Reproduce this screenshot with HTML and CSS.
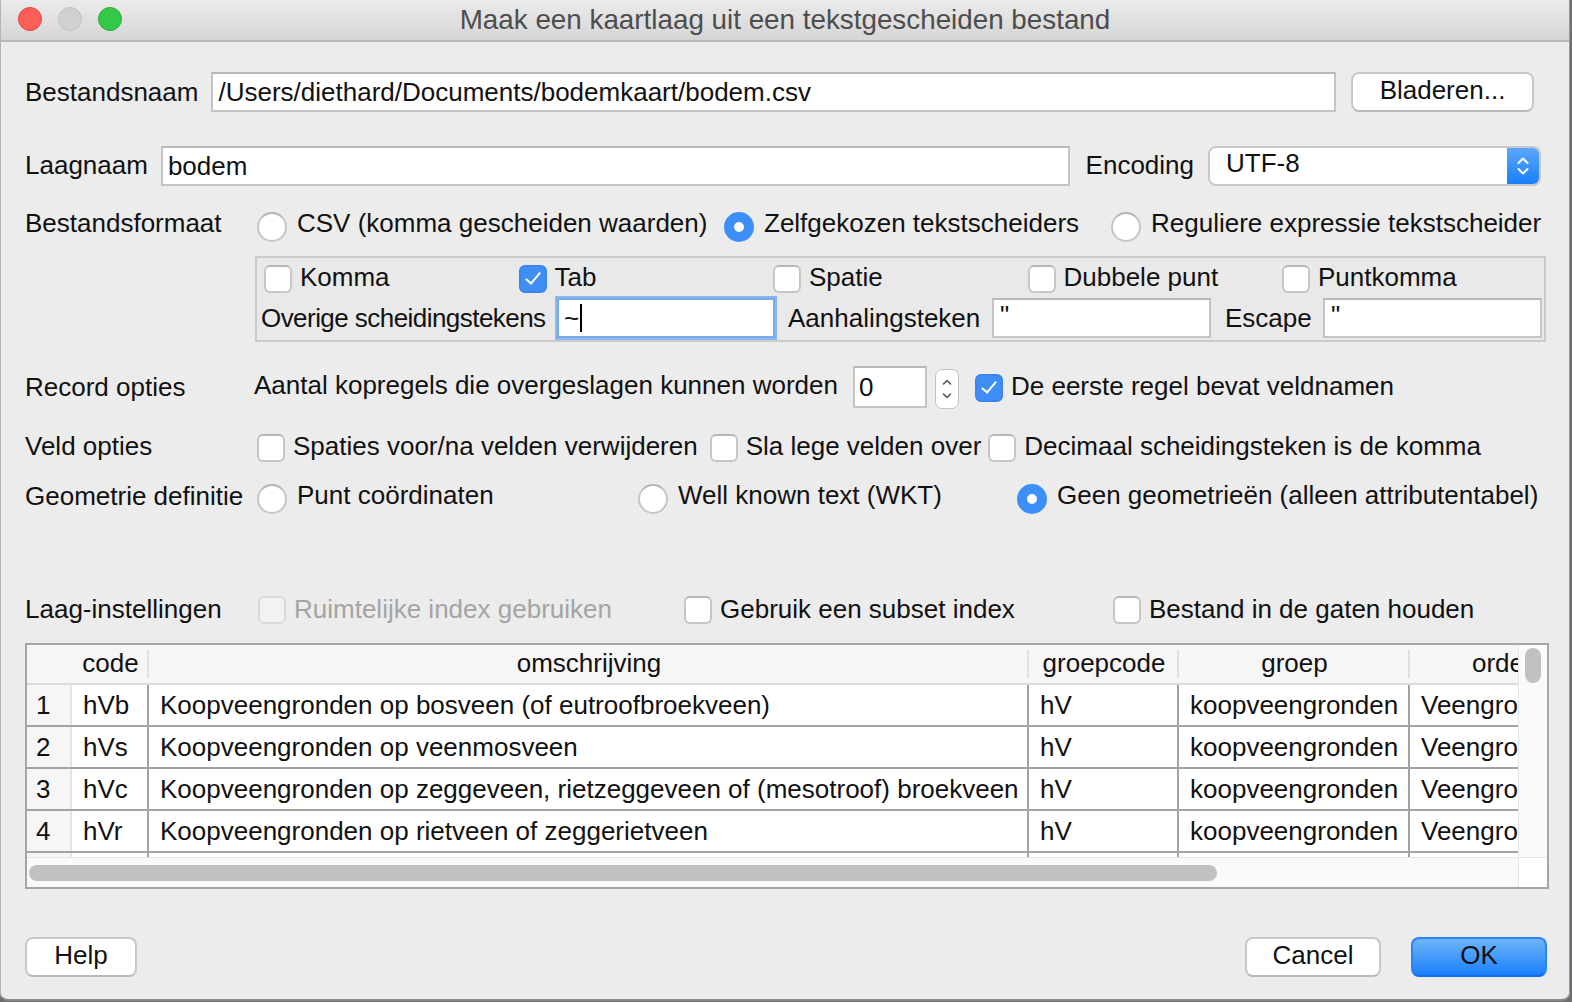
FILE: index.html
```html
<!DOCTYPE html>
<html lang="nl">
<head>
<meta charset="utf-8">
<title>Maak een kaartlaag uit een tekstgescheiden bestand</title>
<link rel="stylesheet" href="styles.css">
</head>
<body>
<div class="window">
  <div class="titlebar">
    <div class="lights">
      <span class="light red"></span>
      <span class="light gray"></span>
      <span class="light green"></span>
    </div>
    <div class="title">Maak een kaartlaag uit een tekstgescheiden bestand</div>
    <div></div>
  </div>

  <div class="content">
    <div class="row r-file">
      <span class="lbl">Bestandsnaam</span>
      <div class="input grow">/Users/diethard/Documents/bodemkaart/bodem.csv</div>
      <div class="btn browse">Bladeren...</div>
    </div>

    <div class="row r-layer">
      <span class="lbl">Laagnaam</span>
      <div class="input grow">bodem</div>
      <span class="lbl">Encoding</span>
      <div class="combo">
        <span class="combo-text">UTF-8</span>
        <span class="combo-arrow">
          <svg width="14" height="24" viewBox="0 0 14 24"><path d="M2.5 9 L7 4.5 L11.5 9 M2.5 15 L7 19.5 L11.5 15" fill="none" stroke="#fff" stroke-width="2" stroke-linecap="round" stroke-linejoin="round"/></svg>
        </span>
      </div>
    </div>

    <div class="row r-format">
      <span class="lbl wide">Bestandsformaat</span>
      <div class="opts opts-format">
        <span class="opt"><span class="radio"></span>CSV (komma gescheiden waarden)</span>
        <span class="opt"><span class="radio on"></span>Zelfgekozen tekstscheiders</span>
        <span class="opt"><span class="radio"></span>Reguliere expressie tekstscheider</span>
      </div>
    </div>

    <div class="group">
      <div class="group-row checks">
        <span class="opt"><span class="cb"></span>Komma</span>
        <span class="opt"><span class="cb on"></span>Tab</span>
        <span class="opt"><span class="cb"></span>Spatie</span>
        <span class="opt"><span class="cb"></span>Dubbele punt</span>
        <span class="opt"><span class="cb"></span>Puntkomma</span>
      </div>
      <div class="group-row fields">
        <span class="f-other">Overige scheidingstekens</span>
        <div class="input focus w-other">~<span class="caret"></span></div>
        <span class="f-quote">Aanhalingsteken</span>
        <div class="input w-quote">"</div>
        <span class="f-escape">Escape</span>
        <div class="input w-escape">"</div>
      </div>
    </div>

    <div class="row r-record">
      <span class="lbl wide">Record opties</span>
      <span class="skip-lbl">Aantal kopregels die overgeslagen kunnen worden</span>
      <div class="input spin">0</div>
      <div class="spin-btns">
        <svg width="14" height="30" viewBox="0 0 14 30"><path d="M3.5 10 L7 6.5 L10.5 10 M3.5 20 L7 23.5 L10.5 20" fill="none" stroke="#555" stroke-width="1.6" stroke-linecap="round" stroke-linejoin="round"/></svg>
      </div>
      <span class="opt"><span class="cb on"></span>De eerste regel bevat veldnamen</span>
    </div>

    <div class="row r-field">
      <span class="lbl wide">Veld opties</span>
      <div class="opts opts-field">
        <span class="opt"><span class="cb"></span>Spaties voor/na velden verwijderen</span>
        <span class="opt"><span class="cb"></span>Sla lege velden over</span>
        <span class="opt"><span class="cb"></span>Decimaal scheidingsteken is de komma</span>
      </div>
    </div>

    <div class="row r-geom">
      <span class="lbl wide">Geometrie definitie</span>
      <div class="opts opts-geom">
        <span class="opt"><span class="radio"></span>Punt coördinaten</span>
        <span class="opt"><span class="radio"></span>Well known text (WKT)</span>
        <span class="opt"><span class="radio on"></span>Geen geometrieën (alleen attributentabel)</span>
      </div>
    </div>

    <div class="row r-laag">
      <span class="lbl wide">Laag-instellingen</span>
      <div class="opts opts-laag">
        <span class="opt disabled"><span class="cb"></span>Ruimtelijke index gebruiken</span>
        <span class="opt"><span class="cb"></span>Gebruik een subset index</span>
        <span class="opt"><span class="cb"></span>Bestand in de gaten houden</span>
      </div>
    </div>

    <div class="table">
      <div class="viewport">
        <div class="trow head">
          <span class="c rn"></span>
          <span class="c code">code</span>
          <span class="c oms">omschrijving</span>
          <span class="c gc">groepcode</span>
          <span class="c gr">groep</span>
          <span class="c orde">orde</span>
        </div>
        <div class="trow">
          <span class="c rn">1</span>
          <span class="c code">hVb</span>
          <span class="c oms">Koopveengronden op bosveen (of eutroofbroekveen)</span>
          <span class="c gc">hV</span>
          <span class="c gr">koopveengronden</span>
          <span class="c orde">Veengronden</span>
        </div>
        <div class="trow">
          <span class="c rn">2</span>
          <span class="c code">hVs</span>
          <span class="c oms">Koopveengronden op veenmosveen</span>
          <span class="c gc">hV</span>
          <span class="c gr">koopveengronden</span>
          <span class="c orde">Veengronden</span>
        </div>
        <div class="trow">
          <span class="c rn">3</span>
          <span class="c code">hVc</span>
          <span class="c oms">Koopveengronden op zeggeveen, rietzeggeveen of (mesotroof) broekveen</span>
          <span class="c gc">hV</span>
          <span class="c gr">koopveengronden</span>
          <span class="c orde">Veengronden</span>
        </div>
        <div class="trow">
          <span class="c rn">4</span>
          <span class="c code">hVr</span>
          <span class="c oms">Koopveengronden op rietveen of zeggerietveen</span>
          <span class="c gc">hV</span>
          <span class="c gr">koopveengronden</span>
          <span class="c orde">Veengronden</span>
        </div>
        <div class="trow">
          <span class="c rn">5</span>
          <span class="c code">hVz</span>
          <span class="c oms">Koopveengronden</span>
          <span class="c gc">hV</span>
          <span class="c gr">koopveengronden</span>
          <span class="c orde">Veengronden</span>
        </div>
      </div>
      <div class="vscroll"><span class="vthumb"></span></div>
      <div class="hscroll"><span class="hthumb"></span></div>
      <div class="corner"></div>
    </div>

    <div class="buttons">
      <div class="btn help">Help</div>
      <div class="spacer"></div>
      <div class="btn cancel">Cancel</div>
      <div class="btn ok">OK</div>
    </div>
  </div>
</div>
</body>
</html>
```

FILE: styles.css
```css
* { box-sizing: border-box; }

html, body {
  margin: 0;
  padding: 0;
  background: #6e6e6e;
}

body {
  width: 1572px;
  height: 1002px;
  overflow: hidden;
  font-family: "Liberation Sans", Arial, Helvetica, sans-serif;
  font-size: 26px;
  color: #111;
}

.window {
  width: 1570px;
  height: 1001px;
  background: #ececec;
  border-right: 1px solid #9a9a9a;
  border-bottom: 2px solid #8a8a8a;
  border-left: 1px solid #b5b5b5;
  border-radius: 0 0 8px 8px;
  display: flex;
  flex-direction: column;
  overflow: hidden;
}

/* title bar */
.titlebar {
  height: 42px;
  flex: none;
  display: grid;
  grid-template-columns: 1fr auto 1fr;
  align-items: center;
  background: linear-gradient(#ebebeb, #d5d5d5);
  border-bottom: 2px solid #b9b9b9;
}

.lights {
  display: flex;
  gap: 16px;
  padding-left: 17px;
  padding-bottom: 2px;
}

.light {
  width: 24px;
  height: 24px;
  border-radius: 50%;
}
.light.red { background: #fc5f57; border: 1px solid #e0443e; }
.light.gray { background: #d0d0d0; border: 1px solid #c2c2c2; }
.light.green { background: #34c849; border: 1px solid #27aa35; }

.title {
  color: #4d4d4d;
  font-size: 27.8px;
}

/* content */
.content {
  flex: 1;
  display: flex;
  flex-direction: column;
  padding: 0 21px 0 24px;
}

.row {
  display: flex;
  align-items: center;
  flex: none;
}

.lbl { flex: none; white-space: nowrap; }
.lbl.wide { width: 229px; }

.input {
  height: 40px;
  background: #fff;
  border: 2px solid #c4c4c4;
  border-top-color: #b8b8b8;
  padding: 0 5px;
  display: flex;
  align-items: center;
  white-space: nowrap;
  overflow: hidden;
}
.grow { flex: 1; }

.btn {
  height: 40px;
  background: #fff;
  border: 2px solid #c8c8c8;
  border-bottom-color: #b9b9b9;
  border-radius: 8px;
  display: flex;
  align-items: center;
  justify-content: center;
  flex: none;
}

.r-file { margin-top: 30px; height: 40px; gap: 13px; }
.r-file .browse { width: 183px; margin-left: 2px; margin-right: 14px; padding-bottom: 3px; }

.r-layer { margin-top: 34px; height: 40px; gap: 13px; }
.r-layer .lbl { padding-bottom: 2px; }
.r-layer .input { margin-right: 3px; }

.combo {
  width: 333px;
  height: 40px;
  flex: none;
  margin-left: 1px;
  margin-right: 7px;
  display: flex;
  background: #fff;
  border: 2px solid #c8c8c8;
  border-radius: 8px;
  overflow: hidden;
}
.combo-text {
  flex: 1;
  padding-left: 16px;
  padding-bottom: 6px;
  display: flex;
  align-items: center;
}
.combo-arrow {
  width: 32px;
  background: linear-gradient(#5aa8fb, #1a7ffa);
  display: flex;
  align-items: center;
  justify-content: center;
}

/* option rows */
.opts { display: grid; align-items: center; }
.opt {
  display: flex;
  align-items: center;
  gap: 10px;
  white-space: nowrap;
}

.radio {
  width: 30px;
  height: 30px;
  flex: none;
  border-radius: 50%;
  background: #fff;
  border: 2px solid #c6c6c6;
  border-top-color: #b5b5b5;
  position: relative;
  top: 4px;
}
.radio.on {
  background: #fff;
  border: 10px solid #3c8ff7;
}

.cb {
  width: 28px;
  height: 28px;
  flex: none;
  border-radius: 6px;
  background: #fff;
  border: 2px solid #c6c6c6;
  border-top-color: #b7b7b7;
  position: relative;
}
.cb.on {
  background: #3e8ef6;
  border-color: #3a86ee;
}
.cb.on::after {
  content: "";
  position: absolute;
  left: 8px;
  top: 2px;
  width: 6px;
  height: 13px;
  border: solid #fff;
  border-width: 0 2px 2px 0;
  transform: rotate(40deg);
}

.r-format { margin-top: 24px; height: 34px; }
.r-format .lbl { padding-bottom: 8px; }
.opts-format {
  padding-left: 3px;
  grid-template-columns: 467px 387px auto;
}
.opts-format .opt { padding-bottom: 8px; }

/* group box */
.group {
  margin-top: 12px;
  margin-left: 230px;
  margin-right: 2px;
  height: 86px;
  border: 2px solid #cbcbcb;
  background: #e9e9e9;
  padding: 4px 2px 2px 4px;
  flex: none;
}
.group-row { display: flex; align-items: center; }
.group-row.checks {
  display: grid;
  grid-template-columns: repeat(5, 254.5px);
  height: 30px;
  padding-left: 3px;
}
.group-row.checks .cb { margin-top: 2px; }
.group-row.checks .opt { gap: 8px; padding-bottom: 2px; }
.group-row.fields {
  margin-top: 6px;
  height: 40px;
  padding-left: 0;
  white-space: nowrap;
}
.f-other { letter-spacing: -0.55px; width: 283px; flex: none; }
.w-other { width: 218px; margin-left: 13px; flex: none; }
.f-quote { margin-left: 13px; width: 191px; flex: none; }
.w-quote { width: 219px; margin-left: 13px; flex: none; }
.f-escape { margin-left: 14px; width: 86px; flex: none; }
.w-escape { width: 219px; margin-left: 12px; flex: none; }
.input.focus {
  border-color: #76a9ee;
  box-shadow: 0 0 0 2px #8ab7f1;
  padding-left: 5px;
}
.caret {
  display: inline-block;
  width: 2px;
  height: 28px;
  background: #000;
  margin-left: 1px;
}
.w-quote, .w-escape { padding-left: 6px; padding-bottom: 6px; }

/* record row */
.r-record { margin-top: 24px; height: 42px; }
.skip-lbl { white-space: nowrap; padding-bottom: 3px; }
.r-record .spin { width: 74px; height: 42px; margin-left: 15px; padding-left: 4px; flex: none; }
.spin-btns {
  width: 24px;
  height: 40px;
  margin-left: 8px;
  margin-top: 4px;
  background: #fff;
  border: 1px solid #c2c2c2;
  border-radius: 7px;
  display: flex;
  align-items: center;
  justify-content: center;
  flex: none;
}
.r-record .opt { margin-left: 16px; gap: 8px; padding-bottom: 2px; }
.r-record .opt .cb { margin-top: 3px; }

/* veld row */
.r-field { margin-top: 23px; height: 30px; }
.opts-field {
  display: flex;
  padding-left: 3px;
  gap: 12px;
}
.opts-field .opt { gap: 8px; }
.opts-field .opt:nth-child(3) { margin-left: -5px; }
.opts-field .cb { margin-top: 4px; }

/* geometry row */
.r-geom { margin-top: 21px; height: 32px; }
.r-geom .lbl { padding-bottom: 4px; }
.opts-geom {
  padding-left: 3px;
  grid-template-columns: 381px 379px auto;
}
.opts-geom .opt { padding-bottom: 6px; }

/* laag row */
.r-laag { margin-top: 80px; height: 30px; }
.opts-laag {
  padding-left: 4px;
  grid-template-columns: 426px 429px auto;
}
.opts-laag .opt { gap: 8px; }
.opts-laag .cb { margin-top: 2px; }
.opt.disabled { color: #a4a4a4; }
.opt.disabled .cb { background: #f2f2f2; border-color: #dadada; }

/* table */
.table {
  margin-top: 19px;
  width: 1524px;
  height: 246px;
  flex: none;
  border: 2px solid #a6a6a6;
  background: #fff;
  display: grid;
  grid-template-columns: 1491px 29px;
  grid-template-rows: 212px 30px;
}
.viewport {
  overflow: hidden;
  background: #fff;
}
.trow {
  display: flex;
  height: 42px;
  width: 1620px;
  border-bottom: 2px solid #a3a3a3;
}
.trow.head {
  height: 40px;
  background: #f6f6f6;
  border-bottom: 2px solid #dcdcdc;
}
.c {
  flex: none;
  display: flex;
  align-items: center;
  padding-left: 11px;
  white-space: nowrap;
  overflow: hidden;
  border-right: 2px solid #a3a3a3;
}
.trow.head .c {
  justify-content: center;
  padding-left: 0;
  padding-bottom: 1px;
  border-right: none;
  background: linear-gradient(#e0e0e0, #e0e0e0) right center / 2px 28px no-repeat;
}
.c.rn { width: 45px; background: #f6f6f6; border-right-color: #e4e4e4; padding-left: 9px; }
.trow.head .c.rn { background: #f6f6f6; }
.c.code { width: 77px; }
.c.oms { width: 880px; }
.c.gc { width: 150px; }
.c.gr { width: 231px; }
.c.orde { width: 176px; border-right: none; }
.trow.head .c.orde { background: none; }

.vscroll {
  background: #fafafa;
  border-left: 1px solid #e6e6e6;
  padding: 3px 0 0 6px;
}
.vthumb {
  display: block;
  width: 16px;
  height: 35px;
  border-radius: 8px;
  background: #c1c1c1;
}
.hscroll {
  background: #fafafa;
  border-top: 1px solid #e6e6e6;
  padding: 7px 0 0 2px;
}
.hthumb {
  display: block;
  width: 1188px;
  height: 16px;
  border-radius: 8px;
  background: #c1c1c1;
}
.corner {
  background: #fff;
  border-left: 1px solid #e6e6e6;
  border-top: 1px solid #e6e6e6;
}

/* bottom buttons */
.buttons {
  margin-top: 48px;
  height: 40px;
  display: flex;
  flex: none;
  margin-right: 1px;
}
.spacer { flex: 1; }
.btn.help { width: 112px; padding-bottom: 4px; }
.btn.cancel { width: 136px; margin-right: 30px; padding-bottom: 4px; }
.btn.ok {
  width: 136px;
  padding-bottom: 4px;
  background: linear-gradient(#6db4fb, #1b7ffb);
  border-color: #2a84f4;
  border-bottom-color: #0f6fe8;
  color: #111;
}
```
